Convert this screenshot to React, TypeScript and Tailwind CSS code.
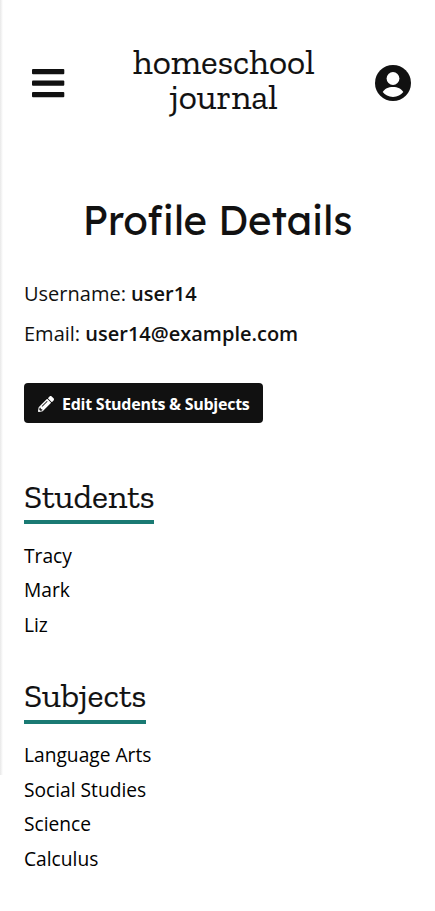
import { FaPencilAlt } from "react-icons/fa";

const slab = "font-['Zilla_Slab','Liberation_Serif',serif] [-webkit-text-stroke:0.15px_#111]";

function MenuIcon() {
  return (
    <svg className="h-[29px] w-[33px]" viewBox="0 0 33 29" fill="currentColor">
      <rect x="0" y="0" width="32.3" height="5.3" rx="1" />
      <rect x="0" y="11.5" width="32.3" height="5.3" rx="1" />
      <rect x="0" y="23" width="32.3" height="5.3" rx="1" />
    </svg>
  );
}

function UserIcon() {
  return (
    <svg className="h-9 w-9" viewBox="0 0 36 36">
      <circle cx="18" cy="18" r="18" fill="currentColor" />
      <circle cx="18" cy="13.5" r="6.4" fill="white" />
      <path d="M7.7 27.1C9.4 24 13.3 22.1 18 22.1s8.6 1.9 10.3 5C26 30 22.4 31.9 18 31.9S10 30 7.7 27.1z" fill="white" />
    </svg>
  );
}

function Section({ title, size, items, className }: { title: string; size: string; items: string[]; className: string }) {
  return (
    <section className={className}>
      <h2 className={`${slab} ${size} h-[47px] whitespace-nowrap border-b-4 border-[#1a7a73] text-[33.8px]`}>{title}</h2>
      <ul className="mt-[14.6px] text-[19.2px] leading-[34.5px] text-black">
        {items.map((item) => <li key={item}>{item}</li>)}
      </ul>
    </section>
  );
}

export default function App() {
  return (
    <div className="flex h-[911px] w-[435px] bg-white font-['Open_Sans',sans-serif] text-[#111]">
      <div className="h-[775px] w-[3px] shrink-0 bg-gradient-to-r from-[#e8e8e8] to-white" />
      <div className="flex-1 pl-[21px] pr-6">
        <header className="flex h-[166px] items-center pl-2">
          <MenuIcon />
          <h1 className={`${slab} -mt-[6px] ml-[68px] flex flex-col text-center text-[35.2px] leading-[35px]`}>
            <span>homeschool</span>
            <span>journal</span>
          </h1>
          <div className="ml-auto"><UserIcon /></div>
        </header>
        <h2 className="mt-[29px] text-center font-['Lexend','Inter',sans-serif] text-[40px] leading-[50px] [-webkit-text-stroke:0.1px_#111]">Profile Details</h2>
        <p className="mt-[31px] text-[20px] leading-9">Username: <b className="font-semibold">user14</b></p>
        <p className="mt-1 text-[20px] leading-9">Email: <b className="font-semibold">user14@example.com</b></p>
        <button className="mt-[31px] flex h-10 w-[239px] items-center gap-2 rounded-[4px] bg-[#111] pl-[14px] text-[16px] font-bold tracking-[-0.25px] text-white">
          <FaPencilAlt className="mt-[2px] h-4 w-4" /><span className="mt-[2px] whitespace-nowrap">Edit Students &amp; Subjects</span>
        </button>
        <Section title="Students" size="w-[130px] leading-[39px]" className="mt-[54px]" items={["Tracy", "Mark", "Liz"]} />
        <Section title="Subjects" size="w-[122px] leading-[38px]" className="mt-[34.6px]" items={["Language Arts", "Social Studies", "Science", "Calculus"]} />
      </div>
    </div>
  );
}
